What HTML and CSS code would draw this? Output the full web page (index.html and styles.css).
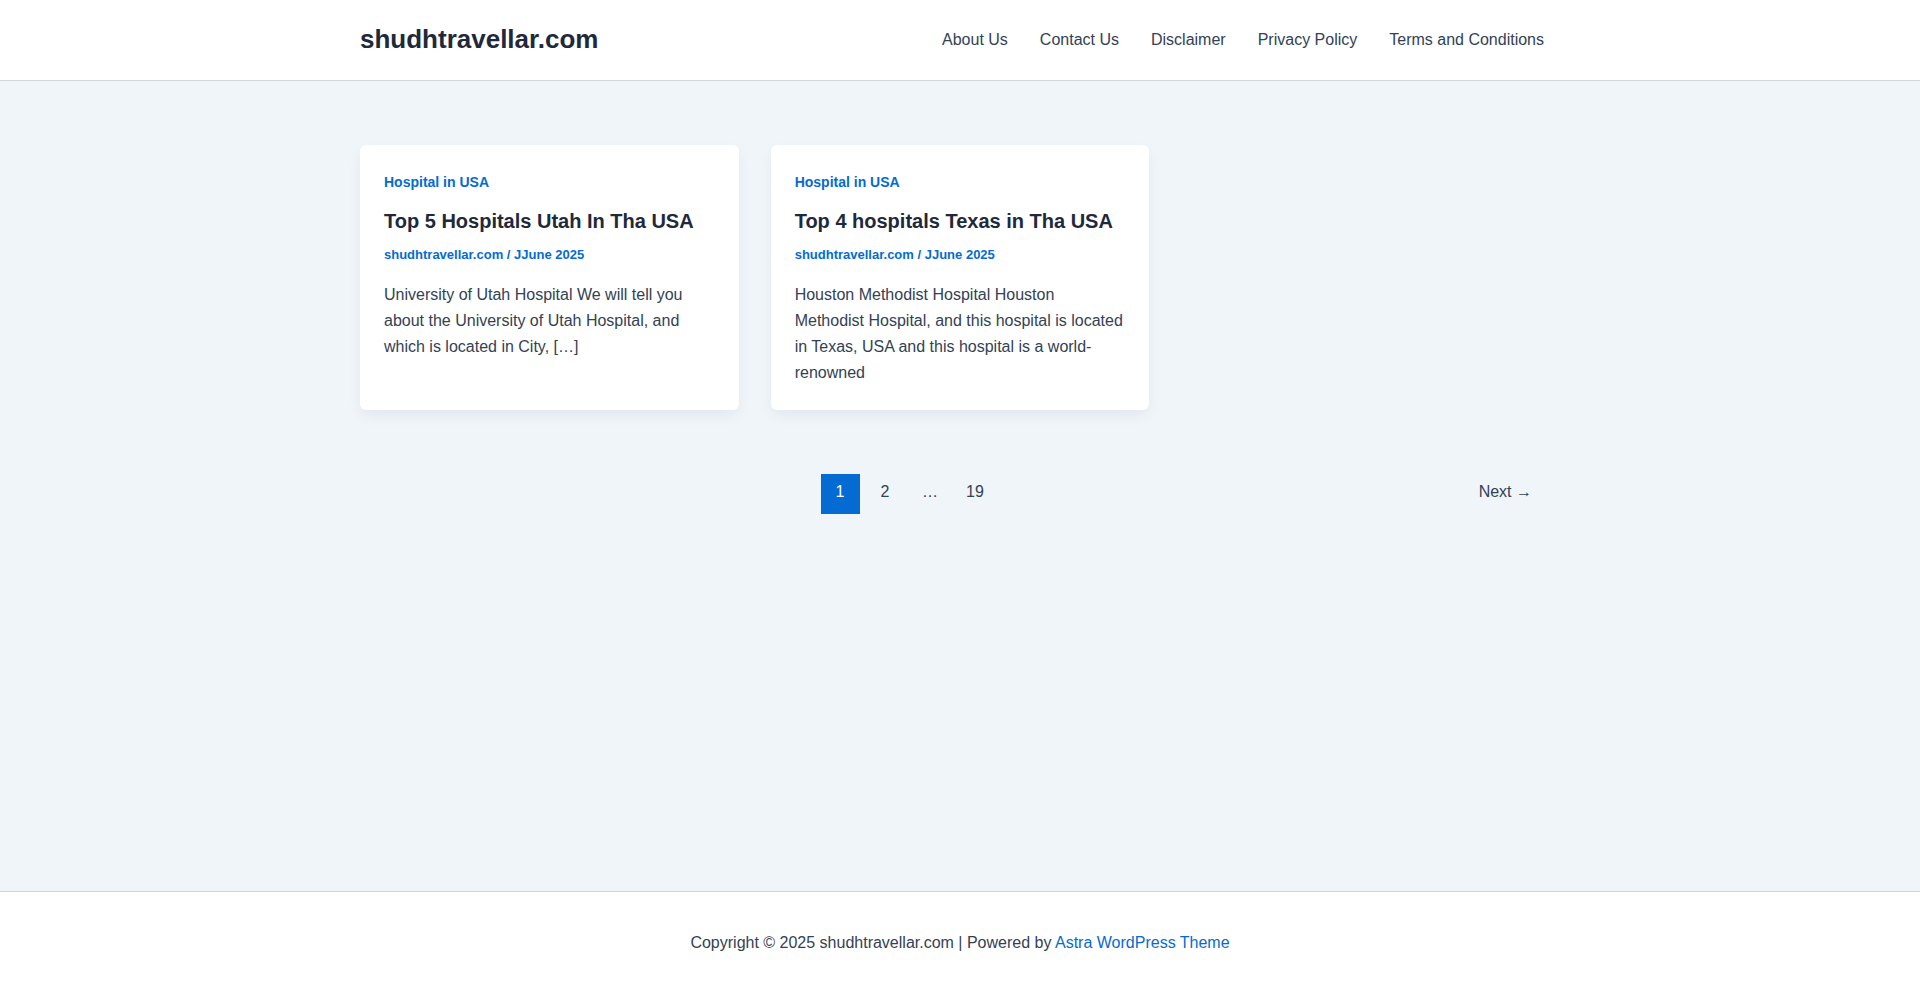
FILE: index.html
```html
<!DOCTYPE html>
<html lang="en">
<head>
    <meta charset="UTF-8">
    <meta name="viewport" content="width=device-width, initial-scale=1.0">
    <title>shudhtravellar.com</title>
    <link rel="stylesheet" href="styles.css">
</head>
<body>
    <header class="site-header">
        <div class="container header-inner">
            <a class="site-title" href="#">shudhtravellar.com</a>
            <nav class="main-nav">
                <a href="#">About Us</a>
                <a href="#">Contact Us</a>
                <a href="#">Disclaimer</a>
                <a href="#">Privacy Policy</a>
                <a href="#">Terms and Conditions</a>
            </nav>
        </div>
    </header>

    <main class="site-content">
        <div class="container">
            <div class="post-grid">
                <article class="post-card">
                    <a class="post-cat" href="#">Hospital in USA</a>
                    <h2 class="post-title"><a href="#">Top 5 Hospitals Utah In Tha USA</a></h2>
                    <div class="post-meta"><a href="#">shudhtravellar.com</a> / <a href="#">JJune 2025</a></div>
                    <p class="post-excerpt">University of Utah Hospital We will tell you about the University of Utah Hospital, and which is located in City, [&hellip;]</p>
                </article>
                <article class="post-card">
                    <a class="post-cat" href="#">Hospital in USA</a>
                    <h2 class="post-title"><a href="#">Top 4 hospitals Texas in Tha USA</a></h2>
                    <div class="post-meta"><a href="#">shudhtravellar.com</a> / <a href="#">JJune 2025</a></div>
                    <p class="post-excerpt">Houston Methodist Hospital Houston Methodist Hospital, and this hospital is located in Texas, USA and this hospital is a world-renowned</p>
                </article>
            </div>

            <nav class="pagination">
                <div class="page-list">
                    <span class="page-num current">1</span>
                    <a class="page-num" href="#">2</a>
                    <span class="page-num dots">&hellip;</span>
                    <a class="page-num" href="#">19</a>
                </div>
                <a class="next-link" href="#">Next &rarr;</a>
            </nav>
        </div>
    </main>

    <footer class="site-footer">
        <p>Copyright &copy; 2025 shudhtravellar.com | Powered by <a href="#">Astra WordPress Theme</a></p>
    </footer>
</body>
</html>
```

FILE: styles.css
```css
* {
    box-sizing: border-box;
}
html, body {
    margin: 0;
    padding: 0;
}
body {
    font-family: "Liberation Sans", Arial, sans-serif;
    font-size: 16px;
    color: #334155;
    background: #f0f5fa;
    min-height: 100vh;
    display: flex;
    flex-direction: column;
}
a {
    text-decoration: none;
    color: inherit;
}
.container {
    width: 1200px;
    margin: 0 auto;
}

/* header */
.site-header {
    background: #fff;
    border-bottom: 1px solid #d1d5db;
}
.header-inner {
    height: 80px;
    display: flex;
    align-items: center;
    justify-content: space-between;
}
.site-title {
    font-size: 26px;
    font-weight: 700;
    color: #1e293b;
    line-height: 1;
    margin-top: -2px;
}
.main-nav {
    display: flex;
}
.main-nav a {
    padding: 0 16px;
    font-size: 16px;
    color: #334155;
}

/* posts */
.site-content {
    flex: 1;
    padding-top: 64px;
}
.post-grid {
    display: grid;
    grid-template-columns: repeat(3, 1fr);
    gap: 32px;
}
.post-card {
    background: #fff;
    border-radius: 6px;
    padding: 25px 24px 24px;
    box-shadow: 0 6px 15px -2px rgba(16, 24, 40, 0.07);
}
.post-cat {
    display: block;
    font-size: 14px;
    font-weight: 700;
    line-height: 24px;
    color: #046bd2;
}
.post-title {
    margin: 14px 0 0;
    font-size: 20px;
    font-weight: 700;
    line-height: 26px;
    color: #1e293b;
}
.post-meta {
    margin-top: 11px;
    font-size: 13px;
    font-weight: 700;
    line-height: 20px;
    color: #046bd2;
}
.post-excerpt {
    margin: 16.5px 0 0;
    font-size: 16px;
    line-height: 26px;
    color: #334155;
}

/* pagination */
.pagination {
    display: flex;
    align-items: center;
    margin-top: 64px;
}
.page-list {
    flex: 1;
    display: flex;
    justify-content: center;
    gap: 6px;
}
.page-num {
    min-width: 39px;
    height: 40px;
    line-height: 36px;
    text-align: center;
    font-size: 16px;
    color: #334155;
}
.page-num.current {
    background: #046bd2;
    color: #fff;
}
.next-link {
    width: 105px;
    padding-right: 28px;
    text-align: right;
    font-size: 16px;
    line-height: 36px;
    height: 40px;
    color: #334155;
}

/* footer */
.site-footer {
    background: #fff;
    border-top: 1px solid #d1d5db;
    padding: 38px 0 37px;
    text-align: center;
}
.site-footer p {
    margin: 0;
    line-height: 26px;
}
.site-footer a {
    color: #046bd2;
}
```
